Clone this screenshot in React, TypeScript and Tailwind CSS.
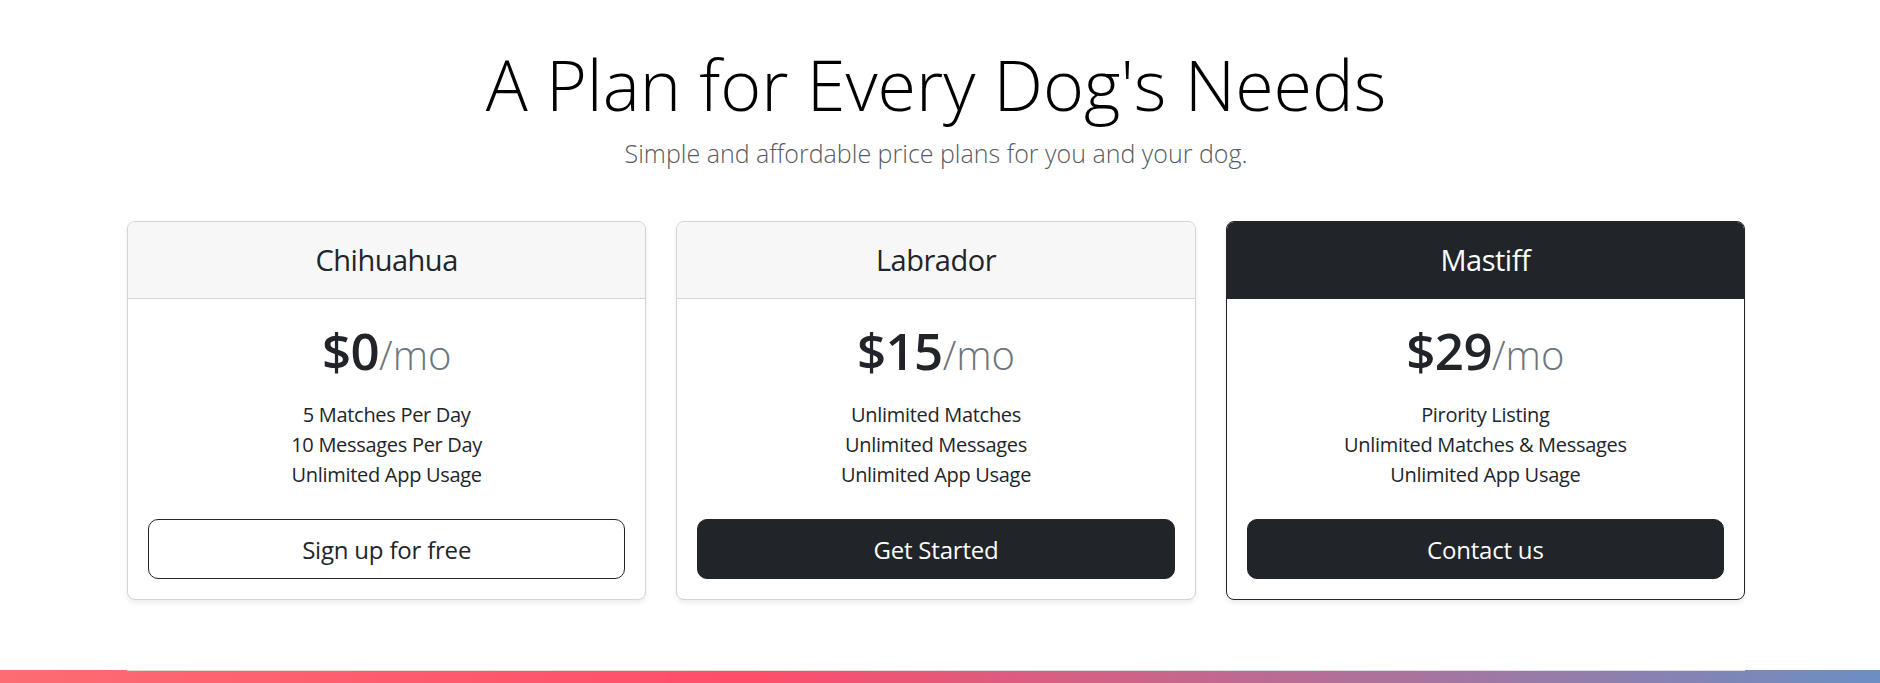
import React from "react";

type Plan = {
  name: string;
  price: string;
  features: string[];
  cta: string;
  variant: "outline" | "solid";
  dark?: boolean;
};

const PLANS: Plan[] = [
  {
    name: "Chihuahua",
    price: "$0",
    features: ["5 Matches Per Day", "10 Messages Per Day", "Unlimited App Usage"],
    cta: "Sign up for free",
    variant: "outline",
  },
  {
    name: "Labrador",
    price: "$15",
    features: ["Unlimited Matches", "Unlimited Messages", "Unlimited App Usage"],
    cta: "Get Started",
    variant: "solid",
  },
  {
    name: "Mastiff",
    price: "$29",
    features: ["Pirority Listing", "Unlimited Matches & Messages", "Unlimited App Usage"],
    cta: "Contact us",
    variant: "solid",
    dark: true,
  },
];

const PricingCard = ({ plan }: { plan: Plan }) => {
  return (
    <div
      className={
        plan.dark
          ? "bg-white rounded-[8px] border border-[#212529] shadow-[0_2.5px_5px_rgba(0,0,0,0.075)] text-center"
          : "bg-white rounded-[8px] border border-[#d4d4d4] shadow-[0_2.5px_5px_rgba(0,0,0,0.075)] text-center"
      }
    >
      {/* Card Header */}
      <div
        className={
          plan.dark
            ? "py-[20px] px-[20px] bg-[#212529] border-b border-[#212529] rounded-t-[7px] text-white"
            : "py-[20px] px-[20px] bg-[#f7f7f7] border-b border-[#d4d4d4] rounded-t-[7px] text-[#212529]"
        }
      >
        <h4 className="text-[29px] leading-[36px] font-normal tracking-[-0.5px]">{plan.name}</h4>
      </div>

      {/* Card Body */}
      <div className="p-[20px]">
        <h1 className="mt-[1px] text-[51px] leading-[60px] font-semibold text-[#212529] tracking-[-0.6px]">
          {plan.price}
          <small className="text-[#6c757d] font-light text-[40px] tracking-normal">/mo</small>
        </h1>
        <ul className="mt-[15px] mb-[29px] text-[20px] leading-[30px] text-[#212529] tracking-[-0.3px]">
          {plan.features.map((f) => (
            <li key={f}>{f}</li>
          ))}
        </ul>
        <button
          type="button"
          className={
            plan.variant === "outline"
              ? "w-full h-[60px] rounded-[10px] border border-[#212529] bg-white text-[#212529] text-[24px] leading-[37px] tracking-[-0.2px]"
              : "w-full h-[60px] rounded-[10px] border border-[#212529] bg-[#212529] text-white text-[24px] leading-[37px] tracking-[-0.2px]"
          }
        >
          {plan.cta}
        </button>
      </div>
    </div>
  );
};

const App = () => {
  return (
    <div className="min-h-[683px] bg-white overflow-hidden font-['Open_Sans','Noto_Sans',sans-serif]">
      <section className="pl-[127px] pr-[135px] pt-[42px]">
        <div className="text-center">
          <h2 className="text-[70px] leading-[84px] font-light text-black">
            A Plan for Every Dog's Needs
          </h2>
          <p className="mt-[9px] text-[25px] leading-[37px] font-light text-[#555b61]">
            Simple and affordable price plans for you and your dog.
          </p>
        </div>

        <div className="grid grid-cols-3 gap-[30px] mt-[49px]">
          {PLANS.map((p) => (
            <PricingCard key={p.name} plan={p} />
          ))}
        </div>
      </section>

      {/* Next section */}
      <div className="mt-[70px] h-[40px] bg-[linear-gradient(to_right,#fd6c72_0%,#ff4d6a_40%,#6b8fc3_100%)]">
        <div className="ml-[127px] mr-[135px] border-t border-[#dcdcdc]" />
      </div>
    </div>
  );
};

export default App;
